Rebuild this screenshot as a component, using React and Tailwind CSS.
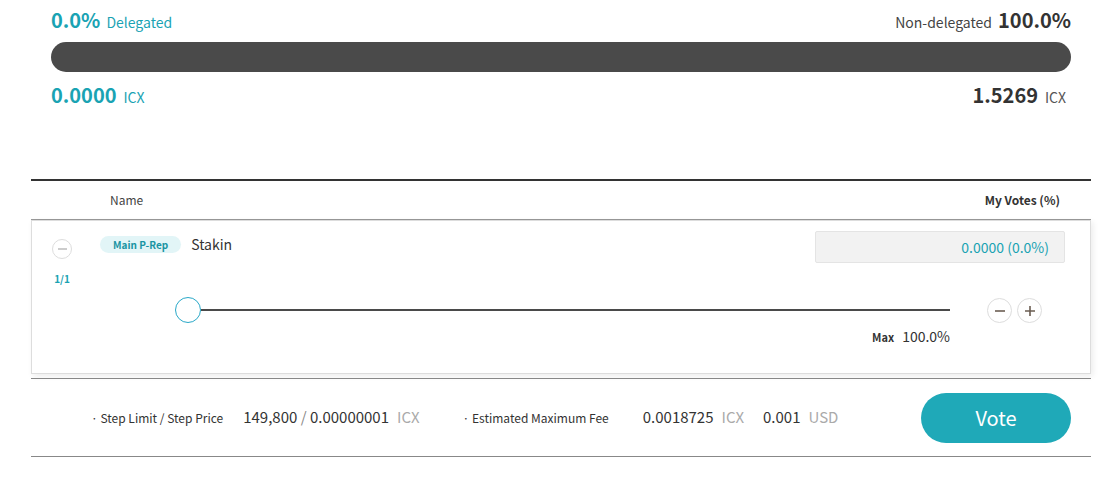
export default function App() {
  const font = { fontFamily: '"Noto Sans CJK KR", "Noto Sans", sans-serif' };
  return (
    <div className="w-[1116px] h-[484px] bg-white text-[#333]" style={font}>
      <div className="ml-[31px] w-[1060px]">
        {/* balance */}
        <div className="px-5">
          <div className="flex items-end justify-between h-[30px]">
            <div className="flex items-baseline gap-[6px]">
              <span className="text-[20px] font-bold text-[#1aa3b3] leading-none">0.0%</span>
              <span className="text-[14px] text-[#1aa3b3] leading-none">Delegated</span>
            </div>
            <div className="flex items-baseline gap-[6px]">
              <span className="text-[14px] text-[#444] leading-none">Non-delegated</span>
              <span className="text-[20px] font-bold text-[#333] leading-none">100.0%</span>
            </div>
          </div>
          <div className="mt-[12px] h-[30px] rounded-full bg-[#4a4a4a]" />
          <div className="mt-[13px] flex items-baseline justify-between pr-[5px]">
            <div className="flex items-baseline gap-[7px]">
              <span className="text-[20px] font-bold text-[#1aa3b3] leading-none">0.0000</span>
              <span className="text-[14px] text-[#1aa3b3] leading-none">ICX</span>
            </div>
            <div className="flex items-baseline gap-[7px]">
              <span className="text-[20px] font-bold text-[#333] leading-none">1.5269</span>
              <span className="text-[14px] text-[#555] leading-none">ICX</span>
            </div>
          </div>
        </div>

        {/* table */}
        <div className="mt-[74px] border-t-2 border-[#333]">
          <div className="flex items-center justify-between h-[39px] border-b border-[#999] text-[12px] pl-[79px] pr-[31px]">
            <span className="text-[#444]">Name</span>
            <span className="font-bold text-[#333]">My Votes (%)</span>
          </div>
          <div className="h-[154px] border border-[#ddd] shadow-[2px_2px_6px_rgba(0,0,0,0.08)] bg-white">
            <div className="flex pt-[10px]">
              <div className="w-[60px] flex flex-col items-center">
                <div className="mt-[8px] w-[20px] h-[20px] rounded-full border border-[#ddd] flex items-center justify-center">
                  <div className="w-[9px] h-[1.5px] bg-[#ccc]" />
                </div>
                <span className="mt-[12px] text-[10px] font-bold text-[#1aa3b3]">1/1</span>
              </div>
              <div className="ml-[8px] flex items-start flex-1 pt-[5px]">
                <span className="h-[17px] px-[13px] rounded-full bg-[#e2f5f7] text-[#1a94a3] text-[10px] font-bold flex items-center">Main P-Rep</span>
                <span className="ml-[10px] text-[14px] text-[#333] leading-[16px]">Stakin</span>
              </div>
              <div className="mr-[25px] w-[250px] h-[32px] bg-[#f2f2f2] border border-[#e4e4e4] rounded-[2px] flex items-center justify-end pr-[15px] text-[14px] text-[#1aa3b3]">
                0.0000 (0.0%)
              </div>
            </div>
            <div className="flex items-start mt-[11px]">
              <div className="ml-[143px] w-[775px]">
                <div className="flex items-center h-[26px]">
                  <div className="w-[26px] h-[26px] rounded-full border-[1.5px] border-[#29a8c8] bg-white shrink-0" />
                  <div className="flex-1 h-[2px] bg-[#4a4a4a]" />
                </div>
                <div className="mt-[3px] flex items-baseline justify-end gap-[8px]">
                  <span className="text-[11px] font-bold text-[#333]">Max</span>
                  <span className="text-[14px] text-[#333]">100.0%</span>
                </div>
              </div>
              <div className="ml-[37px] flex gap-[5px] mt-[1px]">
                <button className="w-[25px] h-[25px] rounded-full border border-[#ddd] flex items-center justify-center text-[#6b5d52]">
                  <svg width="10" height="10" viewBox="0 0 10 10"><path d="M0 5h10" stroke="currentColor" strokeWidth="1.6" /></svg>
                </button>
                <button className="w-[25px] h-[25px] rounded-full border border-[#ddd] flex items-center justify-center text-[#6b5d52]">
                  <svg width="10" height="10" viewBox="0 0 10 10"><path d="M0 5h10M5 0v10" stroke="currentColor" strokeWidth="1.6" /></svg>
                </button>
              </div>
            </div>
          </div>
          <div className="mt-[4px] border-t border-[#888] h-[79px] border-b flex items-center">
            <div className="flex items-center flex-1 pl-[60px] text-[12px]">
              <span className="text-[#333]">·&nbsp;Step Limit / Step Price</span>
              <span className="ml-[20px] text-[15px] text-[#333]">149,800 <span className="text-[#888]">/</span> 0.00000001</span>
              <span className="ml-[8px] text-[15px] text-[#aaa]">ICX</span>
              <span className="ml-[43px] text-[#333]">·&nbsp;Estimated Maximum Fee</span>
              <span className="ml-[34px] text-[15px] text-[#333]">0.0018725</span>
              <span className="ml-[8px] text-[15px] text-[#aaa]">ICX</span>
              <span className="ml-[19px] text-[15px] text-[#333]">0.001</span>
              <span className="ml-[8px] text-[15px] text-[#aaa]">USD</span>
            </div>
            <button className="mr-[20px] w-[150px] h-[50px] rounded-full bg-[#1fa9b8] text-white text-[20px]">Vote</button>
          </div>
        </div>
      </div>
    </div>
  );
}
